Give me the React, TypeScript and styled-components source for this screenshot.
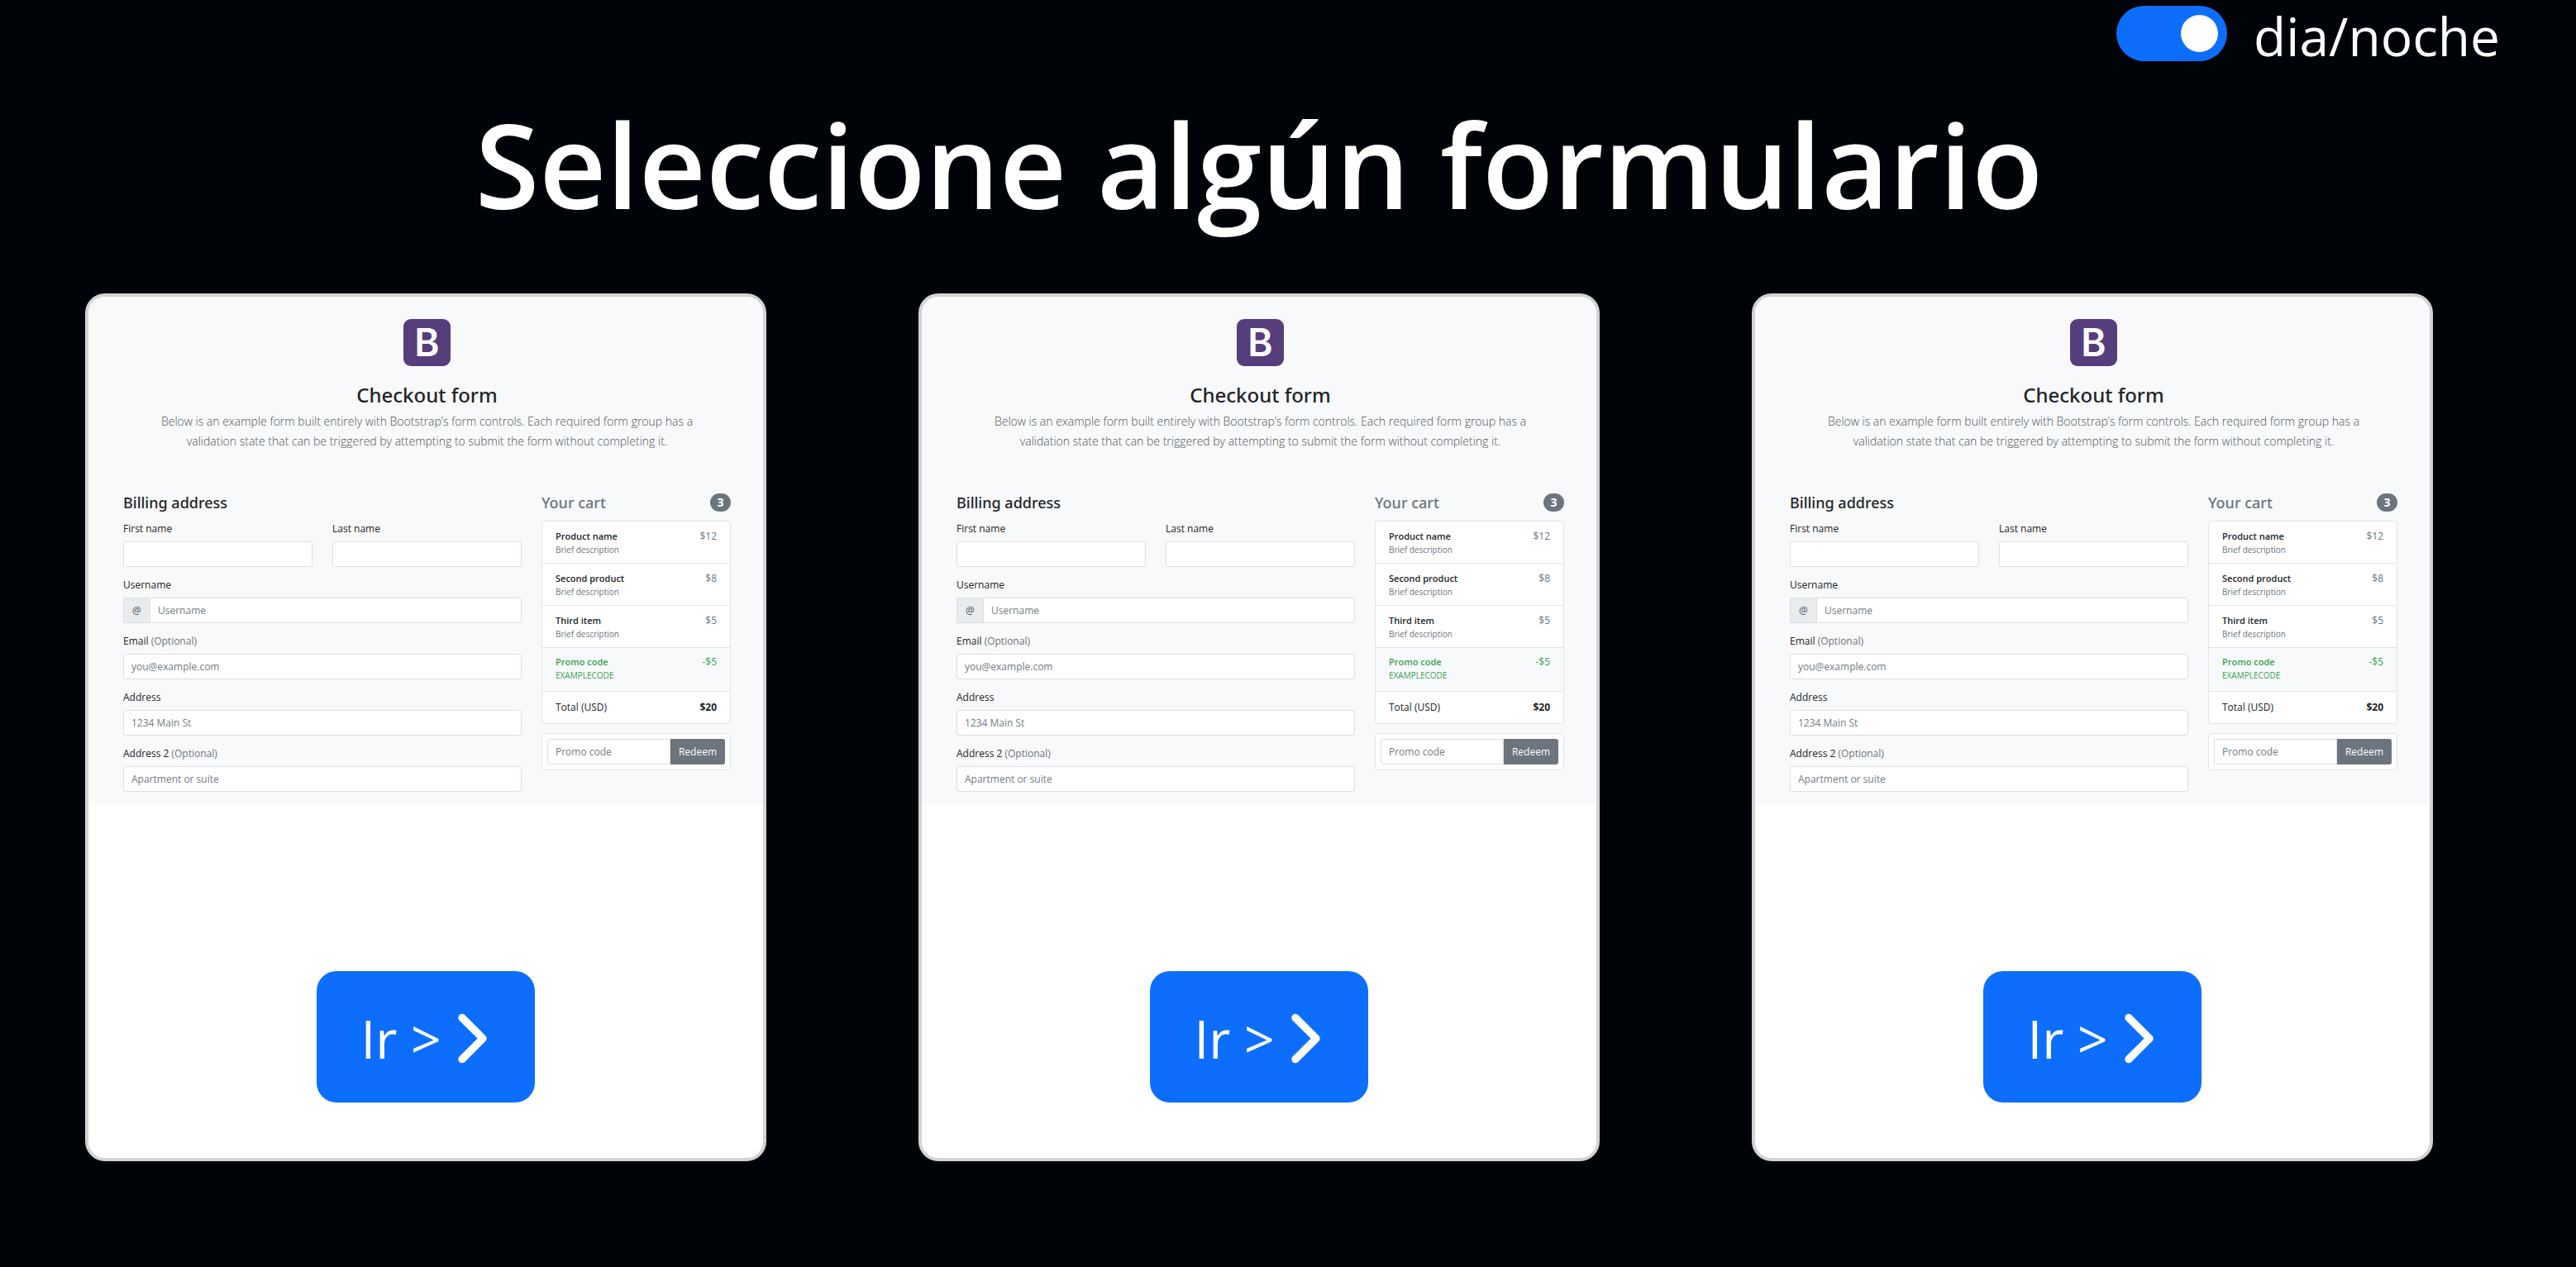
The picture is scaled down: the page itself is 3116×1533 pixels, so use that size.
import React, { useId, useState } from "react";
import styled, { createGlobalStyle } from "styled-components";

const headingFont = `"Noto Sans", "Open Sans", sans-serif`;

const GlobalStyle = createGlobalStyle<{ $night: boolean }>`
  *, *::before, *::after { box-sizing: border-box; }
  body {
    margin: 0;
    min-height: 100vh;
    background: ${(p) => (p.$night ? "#000308" : "#ffffff")};
    color: ${(p) => (p.$night ? "#ffffff" : "#212529")};
    font-family: "Open Sans", "Noto Sans", sans-serif;
  }
  h1, h2, h3, h4, p, ul { margin: 0; padding: 0; }
  button, input { font-family: inherit; margin: 0; }
`;

const Page = styled.div`
  padding-right: 70px;
`;

const TopBar = styled.header`
  display: flex;
  justify-content: flex-end;
  align-items: flex-start;
  gap: 32px;
  padding: 7px 22px 0 0;
`;

const Switch = styled.input`
  appearance: none;
  display: flex;
  align-items: center;
  justify-content: ${(p) => (p.checked ? "flex-end" : "flex-start")};
  width: 134px;
  height: 67px;
  padding: 0 11px;
  border-radius: 34px;
  background: ${(p) => (p.checked ? "#0d6efd" : "#adb5bd")};
  cursor: pointer;

  &::before {
    content: "";
    width: 45px;
    height: 45px;
    border-radius: 50%;
    background: #ffffff;
  }
`;

const SwitchLabel = styled.label`
  font-size: 64px;
  line-height: 74px;
  cursor: pointer;
`;

const Title = styled.h1`
  margin: 28px 0 68px;
  text-align: center;
  font-size: 141px;
  font-weight: 600;
  line-height: 178px;
`;

const Cards = styled.main`
  display: grid;
  grid-template-columns: repeat(3, minmax(0, 1fr));
  gap: 184px;
  padding: 0 103px 128px;
`;

const CardBox = styled.article`
  display: flex;
  flex-direction: column;
  overflow: hidden;
  border: 4px solid #d3d3d3;
  border-radius: 24px;
  background: #ffffff;
  color: #212529;
`;

const Preview = styled.div`
  padding: 27px 39px 15px 42px;
  background: #f8f9fa;
`;

const Intro = styled.div`
  display: flex;
  flex-direction: column;
  align-items: center;
  text-align: center;
`;

const Logo = styled.div`
  display: flex;
  align-items: center;
  justify-content: center;
  width: 57px;
  height: 57px;
  border-radius: 9px;
  background: #563d7c;
  color: #ffffff;
  font-family: Inter, "Liberation Sans", sans-serif;
  font-size: 46px;
  font-weight: 600;
  line-height: 57px;
`;

const FormTitle = styled.h2`
  margin-top: 19px;
  font-family: ${headingFont};
  font-size: 24px;
  font-weight: 500;
  line-height: 32px;
`;

const Lead = styled.p`
  width: 680px;
  max-width: 100%;
  margin-top: 4px;
  color: #4f565c;
  font-size: 14px;
  font-weight: 300;
  line-height: 24px;
`;

const Columns = styled.div`
  display: grid;
  grid-template-columns: minmax(0, 482fr) minmax(0, 229fr);
  gap: 24px;
  margin-top: 48px;
`;

const Heading = styled.h3<{ $muted?: boolean }>`
  color: ${(p) => (p.$muted ? "#6c757d" : "#212529")};
  font-family: ${headingFont};
  font-size: 18px;
  font-weight: 500;
  line-height: 28px;
`;

const Fields = styled.div`
  display: grid;
  grid-template-columns: repeat(2, minmax(0, 1fr));
  gap: 12px 24px;
  margin-top: 8px;
`;

const Field = styled.div<{ $wide?: boolean }>`
  display: flex;
  flex-direction: column;
  gap: 6px;
  grid-column: ${(p) => (p.$wide ? "1 / -1" : "auto")};
`;

const FieldLabel = styled.label`
  font-size: 12px;
  line-height: 19px;
`;

const Muted = styled.span`
  color: #6c757d;
`;

const InputRow = styled.div`
  display: flex;
`;

const Addon = styled.span`
  display: flex;
  align-items: center;
  justify-content: center;
  width: 32px;
  flex-shrink: 0;
  border: 1px solid #dcdfe2;
  border-right: 0;
  border-radius: 3px 0 0 3px;
  background: #e9ecef;
  color: #495057;
  font-size: 12px;
`;

const TextInput = styled.input<{ $joined?: "left" | "right" }>`
  width: 100%;
  min-width: 0;
  height: 31px;
  padding: 0 9px;
  border: 1px solid #dcdfe2;
  border-radius: ${(p) =>
    p.$joined === "left" ? "0 3px 3px 0" : p.$joined === "right" ? "3px 0 0 3px" : "3px"};
  background: #ffffff;
  color: #495057;
  font-size: 12px;

  &::placeholder { color: #747c83; opacity: 1; }
`;

const CartHead = styled.div`
  display: flex;
  align-items: center;
  justify-content: space-between;
`;

const Badge = styled.span`
  width: 25px;
  border-radius: 11px;
  background: #6c757d;
  color: #ffffff;
  text-align: center;
  font-size: 14px;
  font-weight: 700;
  line-height: 22px;
`;

const List = styled.ul`
  margin-top: 8px;
  border: 1px solid #e2e4e6;
  border-radius: 4px;
  background: #ffffff;
  list-style: none;
`;

const tones = { plain: "#6c757d", promo: "#38a150", total: "#212529" };
const itemPadding = { plain: "9px 16px 8px", promo: "8px 16px 11px", total: "10px 16px" };

const Item = styled.li<{ $tone: keyof typeof tones }>`
  display: flex;
  justify-content: space-between;
  padding: ${(p) => itemPadding[p.$tone]};
  border-top: 1px solid #e2e4e6;
  background: ${(p) => (p.$tone === "promo" ? "#f8f9fa" : "transparent")};
  color: ${(p) => tones[p.$tone]};
  font-size: 12px;
  line-height: 18px;

  &:first-child { border-top: 0; }
`;

const ItemName = styled.h4<{ $promo: boolean }>`
  color: ${(p) => (p.$promo ? tones.promo : tones.total)};
  font-size: 11px;
  font-weight: 600;
  line-height: 18px;
`;

const ItemNote = styled.p`
  font-size: 10px;
  line-height: 15px;
`;

const Redeem = styled.form`
  display: flex;
  margin-top: 11px;
  padding: 6px;
  border: 1px solid #e2e4e6;
  border-radius: 4px;
  background: #ffffff;
`;

const RedeemButton = styled.button`
  width: 66px;
  flex-shrink: 0;
  padding: 0;
  border: 0;
  border-radius: 0 3px 3px 0;
  background: #6c757d;
  color: #ffffff;
  font-size: 12px;
`;

const Action = styled.div`
  display: flex;
  justify-content: center;
  padding: 202px 0 67px;
`;

const GoButton = styled.button`
  display: flex;
  align-items: center;
  gap: 4px;
  padding: 32px 42px 28px 53px;
  border: 0;
  border-radius: 24px;
  background: #0d6efd;
  color: #ffffff;
  font-size: 64px;
  line-height: 99px;
  cursor: pointer;
`;

const Chevron = styled.svg`
  width: 67px;
  height: 67px;
  fill: none;
  stroke: currentColor;
  stroke-width: 2.2;
  stroke-linecap: round;
  stroke-linejoin: round;
`;

const products = [
  { name: "Product name", price: "$12" },
  { name: "Second product", price: "$8" },
  { name: "Third item", price: "$5" },
];

const moreFields = [
  { key: "email", label: "Email", optional: true, placeholder: "you@example.com" },
  { key: "address", label: "Address", optional: false, placeholder: "1234 Main St" },
  { key: "address2", label: "Address 2", optional: true, placeholder: "Apartment or suite" },
];

function FormCard() {
  const id = useId();
  return (
    <CardBox>
      <Preview>
        <Intro>
          <Logo>B</Logo>
          <FormTitle>Checkout form</FormTitle>
          <Lead>
            Below is an example form built entirely with Bootstrap’s form controls. Each required
            form group has a validation state that can be triggered by attempting to submit the
            form without completing it.
          </Lead>
        </Intro>
        <Columns>
          <section>
            <Heading>Billing address</Heading>
            <Fields>
              <Field>
                <FieldLabel htmlFor={id + "first"}>First name</FieldLabel>
                <TextInput id={id + "first"} type="text" />
              </Field>
              <Field>
                <FieldLabel htmlFor={id + "last"}>Last name</FieldLabel>
                <TextInput id={id + "last"} type="text" />
              </Field>
              <Field $wide>
                <FieldLabel htmlFor={id + "user"}>Username</FieldLabel>
                <InputRow>
                  <Addon>@</Addon>
                  <TextInput id={id + "user"} type="text" placeholder="Username" $joined="left" />
                </InputRow>
              </Field>
              {moreFields.map((f) => (
                <Field $wide key={f.key}>
                  <FieldLabel htmlFor={id + f.key}>
                    {f.label}
                    {f.optional && <Muted> (Optional)</Muted>}
                  </FieldLabel>
                  <TextInput id={id + f.key} type="text" placeholder={f.placeholder} />
                </Field>
              ))}
            </Fields>
          </section>
          <section>
            <CartHead>
              <Heading $muted>Your cart</Heading>
              <Badge>3</Badge>
            </CartHead>
            <List>
              {products.map((p) => (
                <Item $tone="plain" key={p.name}>
                  <div>
                    <ItemName $promo={false}>{p.name}</ItemName>
                    <ItemNote>Brief description</ItemNote>
                  </div>
                  <span>{p.price}</span>
                </Item>
              ))}
              <Item $tone="promo">
                <div>
                  <ItemName $promo>Promo code</ItemName>
                  <ItemNote>EXAMPLECODE</ItemNote>
                </div>
                <span>-$5</span>
              </Item>
              <Item $tone="total">
                <span>Total (USD)</span>
                <strong>$20</strong>
              </Item>
            </List>
            <Redeem onSubmit={(e) => e.preventDefault()}>
              <TextInput type="text" placeholder="Promo code" aria-label="Promo code" $joined="right" />
              <RedeemButton type="submit">Redeem</RedeemButton>
            </Redeem>
          </section>
        </Columns>
      </Preview>
      <Action>
        <GoButton type="button">
          Ir &gt;
          <Chevron viewBox="0 0 16 16" aria-hidden="true">
            <polyline points="5,2 11,8 5,14" />
          </Chevron>
        </GoButton>
      </Action>
    </CardBox>
  );
}

export default function App() {
  const [night, setNight] = useState(true);
  return (
    <Page>
      <GlobalStyle $night={night} />
      <TopBar>
        <Switch
          id="theme"
          type="checkbox"
          role="switch"
          checked={night}
          onChange={(e) => setNight(e.target.checked)}
        />
        <SwitchLabel htmlFor="theme">dia/noche</SwitchLabel>
      </TopBar>
      <Title>Seleccione algún formulario</Title>
      <Cards>
        <FormCard />
        <FormCard />
        <FormCard />
      </Cards>
    </Page>
  );
}
